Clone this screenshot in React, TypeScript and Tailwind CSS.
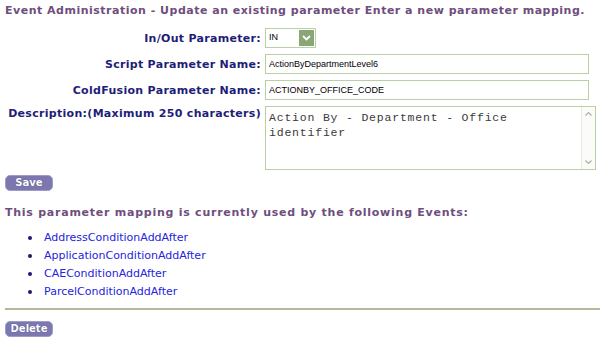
import React from 'react';

const events = [
    'AddressConditionAddAfter',
    'ApplicationConditionAddAfter',
    'CAEConditionAddAfter',
    'ParcelConditionAddAfter',
];

function PurpleButton({ label }: { label: string }) {
    return (
        <button className="h-[16px] w-[48px] rounded-[5px] border border-[#a09bcb] bg-[#7d77b0] text-[10px] font-bold leading-[14px] text-white [text-shadow:0_0_1px_#3b3570]">
            {label}
        </button>
    );
}

export default function App() {
    const labelCls = 'text-right text-[11px] font-bold tracking-[0.3px] text-[#1e1e78] leading-[13px]';
    const inputCls =
        'h-[20px] w-[324px] border border-[#b9d0a4] px-[3px] text-[9px] text-black outline-none [font-family:"Liberation_Sans",Arial,sans-serif]';

    return (
        <div className="h-[342px] w-[600px] overflow-hidden bg-white pt-[4px] pl-[5px] [font-family:'DejaVu_Sans',Verdana,sans-serif]">
            <h1 className="text-[11px] font-bold leading-[13px] tracking-[0.5px] text-[#6e4e7e]">
                Event Administration - Update an existing parameter Enter a new parameter mapping.
            </h1>

            {/* Parameter form */}
            <div className="mt-[11px] grid grid-cols-[256px_1fr] gap-x-[4px] gap-y-[6px]">
                <div className={`${labelCls} self-center`}>In/Out Parameter:</div>
                <div className="flex h-[20px] w-[51px] items-center border border-[#b9d0a4] pl-[3px] pr-[1px]">
                    <span className="flex-1 text-[9px] text-black [font-family:'Liberation_Sans',Arial,sans-serif]">
                        IN
                    </span>
                    <span className="flex h-[16px] w-[15px] items-center justify-center bg-[#8ba676]">
                        <svg width="9" height="6" viewBox="0 0 9 6">
                            <path d="M1 1l3.5 3.5L8 1" stroke="white" strokeWidth="1.8" fill="none" />
                        </svg>
                    </span>
                </div>

                <div className={`${labelCls} self-center`}>Script Parameter Name:</div>
                <input className={inputCls} readOnly value="ActionByDepartmentLevel6" />

                <div className={`${labelCls} self-center`}>ColdFusion Parameter Name:</div>
                <input className={inputCls} readOnly value="ACTIONBY_OFFICE_CODE" />

                <div className={`${labelCls} pt-[1px]`}>Description:(Maximum 250 characters)</div>
                <div className="flex h-[64px] w-[331px] border border-[#b9d0a4]">
                    <textarea
                        readOnly
                        className="flex-1 resize-none overflow-hidden px-[3px] pt-[3px] text-[11.5px] leading-[15px] tracking-[0.8px] text-[#3a3a3a] outline-none [font-family:'Liberation_Mono','Courier_New',monospace]"
                        value="Action By - Department - Office identifier"
                    />
                    <div className="flex w-[14px] flex-col justify-between border-l border-[#e4eadc] bg-[#fbfcf9] py-[2px]">
                        <svg width="13" height="10" viewBox="0 0 13 10">
                            <path d="M3.5 6.5l3-3 3 3" stroke="#a8b4a0" strokeWidth="1.2" fill="none" />
                        </svg>
                        <svg width="13" height="10" viewBox="0 0 13 10">
                            <path d="M3.5 3.5l3 3 3-3" stroke="#a8b4a0" strokeWidth="1.2" fill="none" />
                        </svg>
                    </div>
                </div>
            </div>

            <div className="mt-[5px] flex">
                <PurpleButton label="Save" />
            </div>

            <h2 className="mt-[15px] text-[11px] font-bold leading-[13px] tracking-[0.75px] text-[#6e4e7e]">
                This parameter mapping is currently used by the following Events:
            </h2>

            {/* Events list */}
            <ul className="mt-[10px]">
                {events.map((ev) => (
                    <li key={ev} className="flex h-[18px] items-center">
                        <span className="ml-[23px] h-[4px] w-[4px] rounded-full bg-[#1a1a70]" />
                        <a className="ml-[12px] text-[11px] text-[#2424dc]">{ev}</a>
                    </li>
                ))}
            </ul>

            <div className="mt-[7px] h-[2px] bg-[#b7b799]" />

            <div className="mt-[11px] flex">
                <PurpleButton label="Delete" />
            </div>
        </div>
    );
}
